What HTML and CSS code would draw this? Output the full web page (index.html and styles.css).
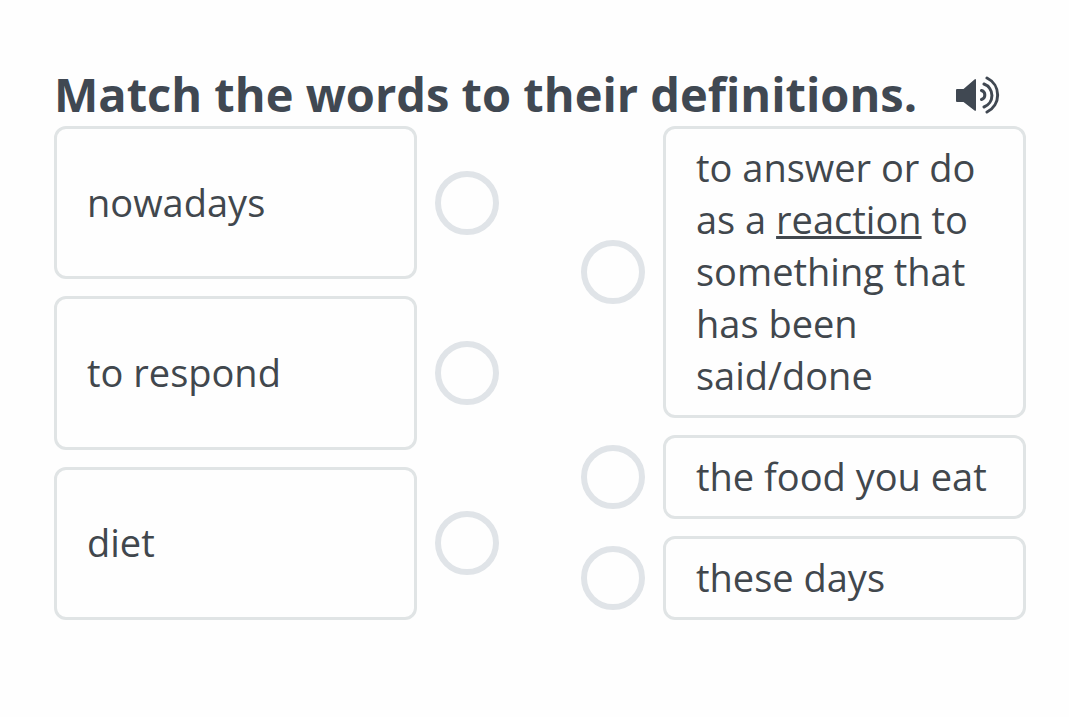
FILE: index.html
```html
<!DOCTYPE html>
<html lang="en">
<head>
    <meta charset="utf-8">
    <meta name="viewport" content="width=device-width, initial-scale=1.0">
    <title>Match the words</title>
    <link rel="stylesheet" href="styles.css">
</head>
<body>
    <main class="exercise">
        <header class="question">
            <h1>Match the words to their definitions.</h1>
            <button type="button" class="listen" aria-label="Listen">
                <svg viewBox="0 0 44 40" aria-hidden="true">
                    <path class="speaker" d="M1 15h6.500L18.500 5.400Q20 4.500 20 6.500v29Q20 37.500 18.500 36.600L7.500 28H1Q0 28 0 27V16Q0 15 1 15z"/>
                    <path class="wave" d="M25.500 16.500a4.700 4.700 0 0 1 0 9M28 10a12.300 12.300 0 0 1 0 23M31 4a18.900 18.900 0 0 1 0 34"/>
                </svg>
            </button>
        </header>

        <div class="match">
            <ul class="column words">
                <li class="row">
                    <div class="card">nowadays</div>
                    <button type="button" class="dot" aria-label="Connect nowadays"></button>
                </li>
                <li class="row">
                    <div class="card">to respond</div>
                    <button type="button" class="dot" aria-label="Connect to respond"></button>
                </li>
                <li class="row">
                    <div class="card">diet</div>
                    <button type="button" class="dot" aria-label="Connect diet"></button>
                </li>
            </ul>

            <ul class="column definitions">
                <li class="row">
                    <button type="button" class="dot" aria-label="Connect definition 1"></button>
                    <div class="card"><p>to answer or do as a <u>reaction</u> to something that has been said/done</p></div>
                </li>
                <li class="row">
                    <button type="button" class="dot" aria-label="Connect definition 2"></button>
                    <div class="card">the food you eat</div>
                </li>
                <li class="row">
                    <button type="button" class="dot" aria-label="Connect definition 3"></button>
                    <div class="card">these days</div>
                </li>
            </ul>
        </div>
    </main>
</body>
</html>
```
FILE: styles.css
```css
* {
    box-sizing: border-box;
}

body {
    margin: 0;
    background: #fefefe;
    font-family: "Open Sans", "Noto Sans", sans-serif;
    color: #41474d;
}

.exercise {
    padding: 62px 43px 62px 54px;
}

.question {
    display: flex;
    align-items: center;
    gap: 39px;
}

h1 {
    margin: 0;
    font-size: 47px;
    line-height: 64px;
    font-weight: 700;
    color: #404852;
}

.listen {
    flex: none;
    padding: 0;
    border: 0;
    background: none;
    color: #404852;
    cursor: pointer;
}

.listen svg {
    display: block;
    width: 44px;
    height: 40px;
}

.speaker {
    fill: currentColor;
}

.wave {
    fill: none;
    stroke: currentColor;
    stroke-width: 3;
    stroke-linecap: round;
}

.match {
    display: grid;
    grid-template-columns: 1fr 1fr;
    gap: 82px;
}

.column {
    display: flex;
    flex-direction: column;
    gap: 17px;
    margin: 0;
    padding: 0;
    list-style: none;
}

.row {
    display: flex;
    align-items: center;
    gap: 18px;
}

.words .row {
    flex: 1;
}

.card {
    display: flex;
    flex: 1;
    align-items: center;
    align-self: stretch;
    padding: 12px 30px 14px;
    border: 3px solid #e0e4e5;
    border-radius: 12px;
    font-size: 38px;
    line-height: 52px;
}

.card p {
    margin: 0;
}

.card u {
    text-decoration-thickness: 3px;
    text-underline-offset: 2px;
}

.dot {
    flex: none;
    width: 64px;
    height: 64px;
    padding: 0;
    border: 6px solid #e0e4e8;
    border-radius: 50%;
    background: transparent;
    cursor: pointer;
}

.dot:hover {
    border-color: #c3cad1;
}

@media (max-width: 900px) {
    .exercise {
        padding: 24px;
    }

    .match {
        gap: 24px;
    }

    h1 {
        font-size: 32px;
        line-height: 48px;
    }

    .card {
        padding: 8px 16px;
        font-size: 24px;
        line-height: 32px;
    }
}
```
